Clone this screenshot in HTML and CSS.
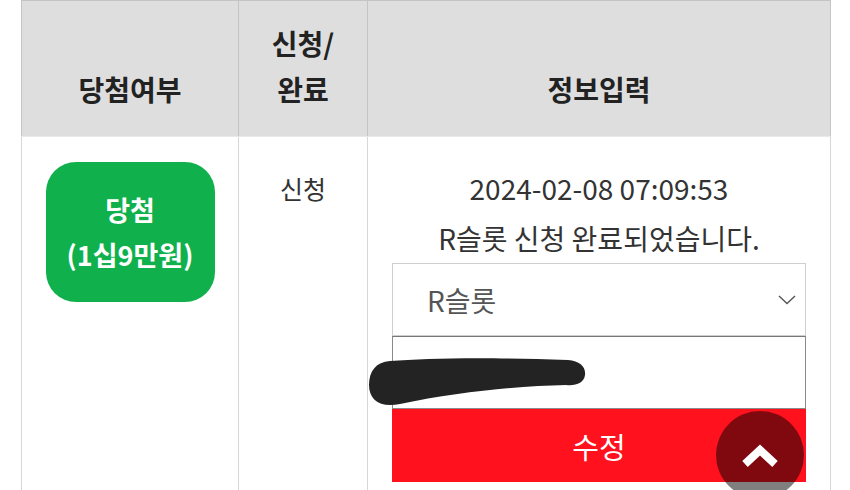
FILE: index.html
```html
<!DOCTYPE html>
<html>
  <head>
    <title>당첨내역</title>
    <link rel="stylesheet" href="styles.css">
  </head>
  <body>
    <table class="result">
      <tr>
        <th class="col-win">당첨여부</th>
        <th class="col-state">신청/<br>완료</th>
        <th class="col-info">정보입력</th>
      </tr>
      <tr>
        <td class="col-win">
          <div class="badge">당첨<br>(1십9만원)</div>
        </td>
        <td class="col-state state">신청</td>
        <td class="col-info info">
          <p class="msg">2024-02-08 07:09:53<br>R슬롯 신청 완료되었습니다.</p>
          <div class="select-box">
            <span>R슬롯</span>
            <svg width="18" height="10" viewBox="0 0 18 10"><path d="M1 1 L9 8.5 L17 1" fill="none" stroke="#555" stroke-width="1.4"/></svg>
          </div>
          <div class="input-box">
            <svg class="scribble" width="230" height="60" viewBox="0 0 230 60">
              <path d="M22 7 C 60 4, 120 3, 200 6 C 212 7, 218 13, 217 21 C 216 29, 208 32, 198 31 C 150 32, 90 38, 32 50 C 12 54, 1 46, 1 31 C 1 17, 8 8, 22 7 Z" fill="#232323"/>
            </svg>
          </div>
          <button class="btn-edit" type="button">수정</button>
        </td>
      </tr>
    </table>

    <a class="to-top" href="#">
      <svg width="40" height="28" viewBox="0 0 40 28"><path d="M5 23 L20 9 L35 23" fill="none" stroke="#fff" stroke-width="8" stroke-linejoin="miter"/></svg>
    </a>
  </body>
</html>
```

FILE: styles.css
```css
body {
  margin: 0;
  background: #fff;
  font-family: "Noto Sans CJK KR", "Noto Sans", sans-serif;
  color: #222;
  height: 490px;
  overflow: hidden;
}

.result {
  margin-left: 21px;
  width: 810px;
  border-collapse: collapse;
  table-layout: fixed;
}

.result th,
.result td {
  border: 1px solid #d6d6d6;
  text-align: center;
  padding: 0;
}

.result th {
  background: #dedede;
  font-size: 28px;
  font-weight: 700;
  line-height: 46px;
  height: 136px;
  vertical-align: bottom;
  padding-bottom: 24px;
  box-sizing: border-box;
  border-color: #c4c4c4;
  border-bottom-color: #e9e9e9;
}

.col-win {
  width: 217px;
}
.col-state {
  width: 129px;
}

.result td {
  vertical-align: top;
  height: 350px;
}

.badge {
  width: 169px;
  margin: 25px auto 0;
  padding: 25px 0;
  border-radius: 30px;
  background: #10b14d;
  color: #fff;
  font-size: 27px;
  font-weight: 700;
  line-height: 45px;
}

.state {
  font-size: 25px;
  line-height: 50px;
  padding-top: 26px !important;
  color: #333;
}

.info {
  padding: 26px 24px 0 !important;
}

.msg {
  margin: 0;
  font-size: 28px;
  line-height: 50px;
  color: #333;
}

.select-box {
  display: flex;
  justify-content: space-between;
  align-items: center;
  height: 73px;
  box-sizing: border-box;
  border: 1px solid #cfcfcf;
  padding: 0 9px 0 34px;
  font-size: 28px;
  color: #555;
}

.input-box {
  position: relative;
  height: 73px;
  box-sizing: border-box;
  border: 1px solid #8a8a8a;
  border-top-color: #777;
}

.scribble {
  position: absolute;
  left: -25px;
  top: 17px;
}

.btn-edit {
  display: block;
  width: 100%;
  height: 73px;
  border: 0;
  margin: 0;
  background: #ff121e;
  color: #fff;
  font-family: inherit;
  font-size: 29px;
}

.to-top {
  position: fixed;
  left: 716px;
  top: 411px;
  width: 88px;
  height: 88px;
  border-radius: 50%;
  background: rgba(0, 0, 0, 0.5);
  display: flex;
  justify-content: center;
  padding-top: 30px;
  box-sizing: border-box;
}

.to-top svg {
  display: block;
}
```
